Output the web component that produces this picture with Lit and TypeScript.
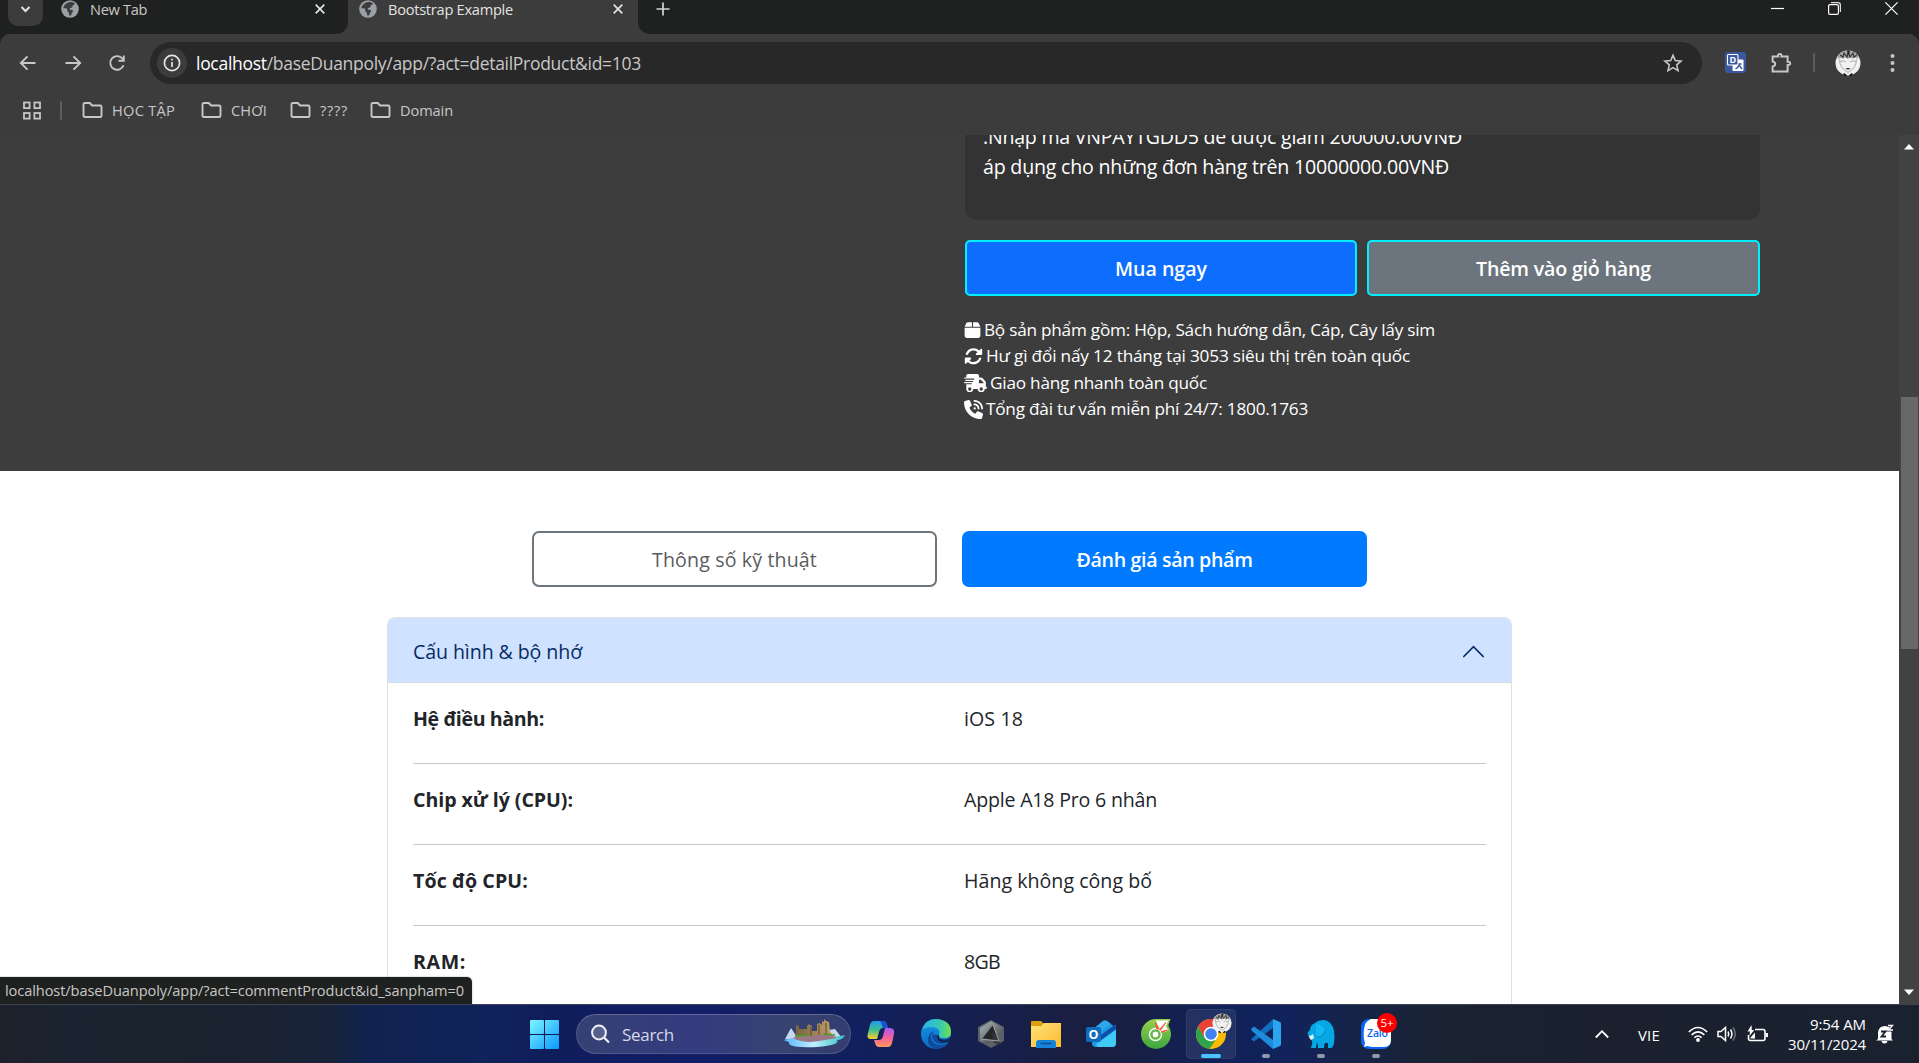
import { LitElement, html, css, svg } from "lit";
import { customElement, property } from "lit/decorators.js";

/** One line of text whose letter spacing is tuned so that it spans `w` pixels. */
@customElement("fit-text")
class FitText extends LitElement {
  @property({ type: Number }) w = 0;
  static styles = css`
    :host { display: inline-block; white-space: nowrap; flex: none; }
  `;
  firstUpdated() {
    const n = [...(this.textContent ?? "").trim()].length;
    const natural = this.getBoundingClientRect().width;
    if (this.w && n) this.style.letterSpacing = `${((this.w - natural) / n).toFixed(3)}px`;
  }
  render() {
    return html`<slot></slot>`;
  }
}

const t = (text: string, w: number) => html`<fit-text w=${w}>${text}</fit-text>`;

const globe = html`<svg class="i18" viewBox="0 0 18 18">
  <circle cx="9" cy="9" r="8.8" fill="#9aa0a6" />
  <path d="M8.2 2.200c2.400-.5 4.600.2 5.800 1.600-.6 1-1.700.9-2.300 1.700-.5.7.1 1.500-.7 2.100-.8.5-1.800.1-2.300.8-.4.7.3 1.300 1.200 1.300 1.500 0 2 .4 2.100 1.400.1 1.100-1.100 1.300-1.300 2.300-.2.9-.5 2-1.700 2.300-1.300-.3-.9-1.600-1-2.500-.2-1.200-1.500-1.200-1.700-2.400-.2-1 .2-1.600-.7-2.200-.9-.5-2-.1-3.200-.4.1-2.600 2.800-5.400 5.800-6z" fill="#3c3c3c"/>
</svg>`;
const tabClose = html`<svg class="i12" viewBox="0 0 12 12"><path d="M1.700 1.700l8.600 8.600M10.300 1.700l-8.600 8.600" stroke="#e3e3e3" stroke-width="1.700"/></svg>`;
const folder = html`<svg class="folder" viewBox="0 0 21 16"><path d="M2.800 1h5l2.200 2.500h8.200q1.300 0 1.300 1.300v8.900q0 1.300-1.300 1.300H2.800q-1.300 0-1.300-1.300V2.300Q1.500 1 2.800 1z" fill="none" stroke="#c7c7c7" stroke-width="1.900"/></svg>`;

const face = svg`
  <circle cx="13" cy="13" r="12.500" fill="#f1f1f1"/>
  <path d="M2.500 9Q3 4 8 1.600 13-.6 18 1.600 23 4 23.500 9 20 6.500 18 9 15 6 13 9 10 6 8 9 5 7 2.500 9z" fill="#a5a5a5"/>
  <path d="M5 5l3 2 1-4 3 4 1-5 2 5 3-4 1 4 3-2" fill="none" stroke="#333" stroke-width="1.200"/>
  <path d="M12 .6h3l-1 5z" fill="#222"/>
  <path d="M5 11.500q3-1.500 6 .3M15 11.800q3-1.800 6-.3M4.500 9q0 9 8.500 13.500Q21.500 18 21.500 9" fill="none" stroke="#a5a5a5" stroke-width=".9"/>
  <path d="M10.500 19q2.500-2 5 0-2.500.8-5 0z" fill="#222"/>
  <path d="M9 23.500l2.500 1.800-2.500-.3zM17 23.500l-2.500 1.800 2.500-.3z" fill="#111" stroke="#111"/>`;

const fa = {
  box: html`<svg class="fa" width="17" height="18" viewBox="0 0 448 512"><path d="M50.700 58.500L0 160H208V32H93.700C75.500 32 58.900 42.300 50.700 58.500zM240 160H448L397.300 58.500C389.100 42.300 372.500 32 354.300 32H240V160zm208 32H0V416c0 35.300 28.700 64 64 64H384c35.300 0 64-28.700 64-64V192z"/></svg>`,
  rotate: html`<svg class="fa" width="19" height="18.500" viewBox="0 0 512 512"><path d="M142.900 142.900c62.200-62.200 162.700-62.500 225.300-1L327 183c-6.900 6.900-8.900 17.200-5.200 26.200s12.500 14.800 22.200 14.800H463.500H472c13.300 0 24-10.700 24-24V72c0-9.700-5.800-18.500-14.800-22.200s-19.300-1.700-26.200 5.200L413.400 96.600c-87.600-86.500-228.700-86.200-315.800 1C73.200 122 55.600 150.700 44.800 181.400c-5.900 16.700 2.900 34.900 19.500 40.800s34.900-2.900 40.800-19.500c7.700-21.800 20.200-42.300 37.800-59.800zM16 312V440c0 9.700 5.800 18.500 14.800 22.200s19.300 1.700 26.200-5.200l41.600-41.600c87.600 86.500 228.700 86.200 315.800-1c24.400-24.400 42.100-53.100 52.900-83.700c5.900-16.700-2.900-34.900-19.500-40.800s-34.900 2.900-40.800 19.500c-7.700 21.800-20.200 42.300-37.800 59.800c-62.200 62.200-162.700 62.500-225.300 1L185 329c6.900-6.900 8.900-17.200 5.200-26.200s-12.500-14.800-22.200-14.800H40c-13.300 0-24 10.700-24 24z"/></svg>`,
  truck: html`<svg class="fa" width="23" height="18.400" viewBox="0 0 640 512"><path d="M112 0C85.500 0 64 21.500 64 48V96H16c-8.800 0-16 7.200-16 16s7.200 16 16 16H64 272c8.800 0 16 7.200 16 16s-7.200 16-16 16H64 48c-8.800 0-16 7.200-16 16s7.200 16 16 16H64 240c8.800 0 16 7.200 16 16s-7.200 16-16 16H64 16c-8.800 0-16 7.200-16 16s7.200 16 16 16H64 208c8.800 0 16 7.200 16 16s-7.200 16-16 16H64V416c0 53 43 96 96 96s96-43 96-96H384c0 53 43 96 96 96s96-43 96-96h32c17.700 0 32-14.300 32-32s-14.300-32-32-32V288 256 237.300c0-17-6.700-33.300-18.700-45.300L512 114.700c-12-12-28.300-18.700-45.300-18.700H416V48c0-26.500-21.500-48-48-48H112zM544 237.300V256H416V160h50.700L544 237.300zM160 368a48 48 0 1 1 0 96 48 48 0 1 1 0-96zm272 48a48 48 0 1 1 96 0 48 48 0 1 1 -96 0z"/></svg>`,
  phone: html`<svg class="fa" width="19" height="19" viewBox="0 0 512 512"><path d="M280 0C408.100 0 512 103.900 512 232c0 13.300-10.700 24-24 24s-24-10.700-24-24c0-101.600-82.400-184-184-184c-13.300 0-24-10.700-24-24s10.700-24 24-24zm8 192a32 32 0 1 1 0 64 32 32 0 1 1 0-64zm-32-72c0-13.300 10.700-24 24-24c75.100 0 136 60.900 136 136c0 13.300-10.700 24-24 24s-24-10.700-24-24c0-48.600-39.400-88-88-88c-13.300 0-24-10.700-24-24zM117.500 1.400c19.400-5.300 39.700 4.600 47.400 23.200l40 96c6.800 16.300 2.100 35.200-11.600 46.300L144 207.300c33.300 70.400 90.300 127.400 160.700 160.700L345 318.700c11.200-13.700 30-18.400 46.300-11.600l96 40c18.600 7.700 28.500 28 23.200 47.400l-24 88C481.800 499.900 466 512 448 512C200.600 512 0 311.400 0 64C0 46 12.100 30.200 29.500 25.400l88-24z"/></svg>`,
};

@customElement("browser-chrome")
class BrowserChrome extends LitElement {
  static styles = css`
    :host { display: block; background: #1f2120; color: #c7c7c7; font-family: "Open Sans", "Noto Sans", sans-serif; }
    svg { display: block; flex: none; }
    .i18 { width: 18px; height: 18px; }
    .i12 { width: 12px; height: 12px; }
    .strip { height: 34px; display: flex; }
    .drop { width: 35px; height: 26px; margin-left: 8px; background: #3c3c3c; border-radius: 0 0 10px 10px; display: flex; justify-content: center; }
    .drop svg { margin-top: 5px; }
    .tab { height: 34px; display: flex; box-sizing: border-box; font-size: 14.600px; line-height: 20px; }
    .tab .i12 { margin-top: 3px; }
    .label { margin-top: -1px; margin-left: 11px; flex: 1; }
    .first { width: 305px; padding-left: 18px; padding-right: 22px; background: #1f2120; border-bottom-right-radius: 12px; }
    .under { background: #3c3c3c; }
    .second { width: 290px; background: #3c3c3c; padding: 0 14px 0 11px; color: #e3e3e3; }
    .rest { flex: 1; background: #3c3c3c; }
    .rest-in { height: 34px; background: #1f2120; border-bottom-left-radius: 12px; display: flex; padding-left: 18px; }
    .rest-in .plus { margin-top: 2px; }
    .wins { margin-left: auto; margin-right: 21px; margin-top: 2px; display: flex; gap: 44px; }
    .bar { height: 57px; background: #3c3c3c; border-radius: 10px 10px 0 0; display: flex; align-items: center; padding-left: 16px; }
    .nav { display: flex; gap: 20.500px; }
    .omni { width: 1552px; height: 42px; border-radius: 21px; background: #282828; margin-left: 21px; display: flex; align-items: center; box-sizing: border-box; padding: 0 19px 0 7px; }
    .info { width: 30px; height: 30px; border-radius: 50%; background: #3c3c3c; display: flex; align-items: center; justify-content: center; }
    .url { margin-left: 9px; font-size: 17.500px; line-height: 24px; flex: 1; padding-top: 1px; }
    .url b { font-weight: 400; color: #fff; }
    .ext { display: flex; align-items: center; margin-left: 23px; }
    .ext .puz { margin-left: 23px; }
    .sep { width: 2px; height: 19px; background: #5e5e5e; border-radius: 1px; }
    .ext .sep { margin-left: 20px; }
    .ext .av { margin-left: 20px; }
    .ext .dots { margin-left: 29px; }
    .marks { height: 44px; background: #3c3c3c; display: flex; align-items: center; padding-left: 23px; box-sizing: border-box; padding-bottom: 6px; }
    .marks .sep { margin: 0 20px 0 19px; }
    .mark { display: flex; align-items: center; gap: 9px; font-size: 14.600px; line-height: 20px; }
    .folder { width: 21px; height: 16px; }
    .m1 { margin-right: 26px; } .m2 { margin-right: 23px; } .m3 { margin-right: 22px; }
  `;
  render() {
    return html`
      <div class="strip">
        <div class="drop"><svg width="11" height="9" viewBox="0 0 11 9"><path d="M1.500 2l4 4 4-4" fill="none" stroke="#e3e3e3" stroke-width="2"/></svg></div>
        <div class="under"><div class="tab first">${globe}<div class="label">${t("New Tab", 57)}</div>${tabClose}</div></div>
        <div class="tab second">${globe}<div class="label">${t("Bootstrap Example", 125)}</div>${tabClose}</div>
        <div class="rest"><div class="rest-in">
          <svg class="plus" width="14" height="14" viewBox="0 0 14 14"><path d="M7 .5v13M.5 7h13" stroke="#d5d5d5" stroke-width="1.700"/></svg>
          <div class="wins">
            <svg width="13" height="13" viewBox="0 0 13 13"><path d="M0 6.500h13" stroke="#fff" stroke-width="1.200"/></svg>
            <svg width="13" height="13" viewBox="0 0 13 13"><rect x=".6" y="2.600" width="9.800" height="9.800" rx="1.500" fill="none" stroke="#fff" stroke-width="1.200"/><path d="M3 .6h7q2.400 0 2.400 2.400v7" fill="none" stroke="#ddd" stroke-width="1.200"/></svg>
            <svg width="13" height="13" viewBox="0 0 13 13"><path d="M.4.4l12.200 12.200M12.600.4L.4 12.600" stroke="#fff" stroke-width="1.200"/></svg>
          </div>
        </div></div>
      </div>
      <div class="bar">
        <div class="nav">
          <svg width="24" height="24" viewBox="0 0 24 24"><path d="M19.500 12H5.500M11.500 5.300L4.800 12l6.700 6.700" fill="none" stroke="#c7c7c7" stroke-width="1.900"/></svg>
          <svg width="24" height="24" viewBox="0 0 24 24"><path d="M4.500 12h14M12.500 5.300l6.700 6.700-6.700 6.700" fill="none" stroke="#c7c7c7" stroke-width="1.900"/></svg>
          <svg width="24" height="24" viewBox="0 0 24 24"><path d="M18.500 14.200a6.800 6.800 0 1 1-1.500-7l2 2M18.800 4.500v5.300h-5.300" fill="none" stroke="#c7c7c7" stroke-width="1.900"/></svg>
        </div>
        <div class="omni">
          <div class="info"><svg width="18" height="18" viewBox="0 0 18 18"><circle cx="9" cy="9" r="7.600" fill="none" stroke="#e3e3e3" stroke-width="1.700"/><path d="M9 8v5M9 4.800v1.800" stroke="#e3e3e3" stroke-width="1.700"/></svg></div>
          <div class="url"><fit-text w="445"><b>localhost</b>/baseDuanpoly/app/?act=detailProduct&amp;id=103</fit-text></div>
          <svg width="20" height="20" viewBox="0 0 20 20"><path d="M10 2.200l2.300 5.400 5.800.5-4.400 3.800 1.300 5.700-5-3-5 3 1.300-5.700L1.900 8.100l5.800-.5z" fill="none" stroke="#c7c7c7" stroke-width="1.600"/></svg>
        </div>
        <div class="ext">
          <svg width="21" height="21" viewBox="0 0 21 21"><rect width="21" height="21" rx="3" fill="#3b57a0"/><rect x="7.500" y="7.500" width="11" height="11.500" rx="1" fill="#fff"/><rect x="2.500" y="2.500" width="10.500" height="10.500" rx="1" fill="#3b57a0" stroke="#fff" stroke-width="1.100"/><text x="4.600" y="11" font-size="9" font-weight="700" fill="#fff" font-family="Open Sans">D</text><path d="M10.500 17q3-1.500 3.500-4l3 4M13.500 12h3" stroke="#3b57a0" stroke-width="1.300" fill="none"/></svg>
          <svg class="puz" width="24" height="24" viewBox="0 0 24 24"><path d="M3.600 5.500h5.600q-.4-2.600 1.600-2.600t1.600 2.600h6.200v5.300q2.600-.3 2.600 1.600t-2.600 1.600v6.500H3.600v-5q2.600-.4 2.600-2.500T3.600 10.500z" fill="none" stroke="#c7c7c7" stroke-width="2"/></svg>
          <div class="sep"></div>
          <svg class="av" width="26" height="26" viewBox="0 0 26 26">${face}</svg>
          <svg class="dots" width="5" height="20" viewBox="0 0 5 20"><g fill="#c7c7c7"><circle cx="2.500" cy="3" r="2"/><circle cx="2.500" cy="10" r="2"/><circle cx="2.500" cy="17" r="2"/></g></svg>
        </div>
      </div>
      <div class="marks">
        <svg width="18" height="19" viewBox="0 0 18 19"><g fill="none" stroke="#c7c7c7" stroke-width="1.800"><rect x="1" y="1.500" width="5.600" height="5.600"/><rect x="11.400" y="1.500" width="5.600" height="5.600"/><rect x="1" y="12" width="5.600" height="5.600"/><rect x="11.400" y="12" width="5.600" height="5.600"/></g></svg>
        <div class="sep"></div>
        <div class="mark m1">${folder}${t("HỌC TẬP", 63)}</div>
        <div class="mark m2">${folder}${t("CHƠI", 36)}</div>
        <div class="mark m3">${folder}${t("????", 28)}</div>
        <div class="mark">${folder}${t("Domain", 53)}</div>
      </div>`;
  }
}

@customElement("product-page")
class ProductPage extends LitElement {
  static styles = css`
    :host { display: flex; height: 869px; overflow: hidden; background: #fff; font-family: "Open Sans", "Noto Sans", sans-serif; font-size: 19.600px; line-height: 30px; color: #212529; position: relative; }
    svg { display: block; flex: none; }
    .page { width: 1899px; height: 869px; overflow: hidden; }
    .dark { height: 336px; background: #3d3d3d; color: #fff; box-sizing: border-box; padding-left: 965px; overflow: hidden; }
    .promo { width: 795px; height: 85px; background: #333; border-radius: 0 0 12px 12px; box-sizing: border-box; padding-left: 18px; display: flex; flex-direction: column; overflow: hidden; }
    .promo div { height: 30px; flex: none; }
    .promo div:first-child { margin-top: -13px; }
    .buy { display: flex; gap: 10px; width: 795px; margin-top: 20px; }
    .buy div { width: 392px; height: 56px; box-sizing: border-box; border: 2px solid #00f0ff; border-radius: 5px; text-align: center; line-height: 54px; font-weight: 600; background: #0d6efd; }
    .buy div.grey { width: 393px; background: #6c757d; }
    .perks { margin: 21px 0 0 -1px; font-size: 17.200px; line-height: 26.400px; }
    .perk { height: 26.400px; display: flex; align-items: center; gap: 3px; }
    .fa { fill: #fff; }
    .toggles { display: flex; gap: 25px; margin: 60px 0 0 532px; }
    .toggles div { width: 405px; height: 56px; box-sizing: border-box; border: 2px solid #6c757d; border-radius: 7px; text-align: center; line-height: 54px; font-weight: 500; color: #5a5c5e; }
    .toggles div.on { background: #007bff; border-color: #007bff; color: #fff; font-weight: 600; }
    .acc { width: 1125px; height: 420px; margin: 30px 0 0 387px; box-sizing: border-box; border: 1px solid #dee2e6; border-bottom: 0; border-radius: 8px 8px 0 0; overflow: hidden; }
    .head { height: 65px; box-sizing: border-box; border-bottom: 1px solid #d5dbe3; background: #cfe2ff; color: #052c65; display: flex; align-items: center; justify-content: space-between; padding: 4px 27px 0 25px; }
    .head svg { margin-top: -2px; }
    .rows { padding: 20px 25px 0; }
    .row { display: flex; height: 61px; box-sizing: border-box; border-bottom: 1px solid #c6c8ca; margin-bottom: 20px; padding-top: 1px; }
    .row b { width: 551px; font-weight: 700; }
    .sb { width: 20px; background: #424242; display: flex; flex-direction: column; align-items: center; }
    .sb .up { margin-top: 9px; }
    .thumb { width: 17px; height: 252px; background: #686868; margin-top: 247px; }
    .sb .down { margin-top: auto; margin-bottom: 9px; }
    .status { position: absolute; left: 0; bottom: 0; width: 472px; height: 27px; background: #1f2120; color: #c7c7c7; border-top-right-radius: 5px; box-sizing: border-box; padding-left: 5px; font-size: 14.600px; line-height: 27px; box-shadow: 0 0 1px 1px #8883; }
  `;
  private specs: [string, number, string, number][] = [
    ["Hệ điều hành:", 131, "iOS 18", 59],
    ["Chip xử lý (CPU):", 160, "Apple A18 Pro 6 nhân", 193],
    ["Tốc độ CPU:", 115, "Hãng không công bố", 188],
    ["RAM:", 53, "8GB", 36],
  ];
  render() {
    return html`
      <div class="page">
        <div class="dark">
          <div class="promo">
            <div>${t(".Nhập mã VNPAYTGDD5 để được giảm 200000.00VNĐ", 479)}</div>
            <div>${t("áp dụng cho những đơn hàng trên 10000000.00VNĐ", 466)}</div>
          </div>
          <div class="buy">
            <div>${t("Mua ngay", 92)}</div>
            <div class="grey">${t("Thêm vào giỏ hàng", 175)}</div>
          </div>
          <div class="perks">
            <div class="perk">${fa.box}${t("Bộ sản phẩm gồm: Hộp, Sách hướng dẫn, Cáp, Cây lấy sim", 451)}</div>
            <div class="perk">${fa.rotate}${t("Hư gì đổi nấy 12 tháng tại 3053 siêu thị trên toàn quốc", 424)}</div>
            <div class="perk">${fa.truck}${t("Giao hàng nhanh toàn quốc", 217)}</div>
            <div class="perk">${fa.phone}${t("Tổng đài tư vấn miễn phí 24/7: 1800.1763", 322)}</div>
          </div>
        </div>
        <div class="toggles">
          <div>${t("Thông số kỹ thuật", 165)}</div>
          <div class="on">${t("Đánh giá sản phẩm", 176)}</div>
        </div>
        <div class="acc">
          <div class="head">
            ${t("Cấu hình & bộ nhớ", 169)}
            <svg width="21" height="13" viewBox="0 0 21 13"><path d="M.8 11.500L10.500 1.600l9.700 9.900" fill="none" stroke="#052c65" stroke-width="1.700" stroke-linecap="round"/></svg>
          </div>
          <div class="rows">
            ${this.specs.map(([k, kw, v, vw]) => html`<div class="row"><b>${t(k, kw)}</b>${t(v, vw)}</div>`)}
          </div>
        </div>
      </div>
      <div class="sb">
        <svg class="up" width="10" height="6" viewBox="0 0 10 6"><path d="M0 5.500L5 0l5 5.500z" fill="#fff"/></svg>
        <div class="thumb"></div>
        <svg class="down" width="10" height="6" viewBox="0 0 10 6"><path d="M0 .5L5 6l5-5.500z" fill="#fff"/></svg>
      </div>
      <div class="status">${t("localhost/baseDuanpoly/app/?act=commentProduct&id_sanpham=0", 459)}</div>`;
  }
}

@customElement("task-bar")
class TaskBar extends LitElement {
  static styles = css`
    :host { display: flex; height: 59px; box-sizing: border-box; border-top: 1px solid #3c4257; color: #fff; font-family: "Open Sans", "Noto Sans", sans-serif;
      background: linear-gradient(90deg, #1e212b 0, #1a232f 60px, #1b222f 240px, #18233a 330px, #10234f 365px, #10235a 480px, #101d5c 560px, #121e66 690px, #11205e 860px, #151f50 960px, #1a1f40 1080px, #171f45 1140px, #10215a 1210px, #11235a 1290px, #152449 1350px, #1a2333 1430px, #1a202d 1600px, #1a2230 1919px); }
    svg { display: block; flex: none; overflow: visible; }
    .start { margin: 15px 0 0 530px; }
    .search { width: 275px; height: 40px; box-sizing: border-box; margin: 9px 0 0 17px; border-radius: 20px; border: 1px solid #ffffff22; border-top-color: #ffffff38; background: linear-gradient(90deg, #354173, #343b80 45%, #364370 75%, #333d70); display: flex; align-items: center; padding: 0 5px 0 14px; font-size: 17px; color: #d5d9e8; }
    .search fit-text { margin-left: 12px; margin-right: auto; line-height: 22px; padding-top: 1px; }
    .apps { display: flex; margin-left: 2px; }
    .app { width: 55px; height: 58px; display: flex; flex-direction: column; align-items: center; padding-top: 14px; box-sizing: border-box; }
    .dot { width: 8px; height: 4px; border-radius: 2px; background: #9498ac; margin-top: 5px; flex: none; }
    .dot.on { width: 20px; background: #4cc2ff; }
    .tile { width: 50px; height: 50px; margin: 4px 2.500px 0; padding-top: 9px; border-radius: 5px; background: #ffffff14; border: 1px solid #ffffff10; box-sizing: border-box; }
    .tray { margin-left: auto; margin-right: 25px; display: flex; align-items: center; height: 57px; font-size: 15px; line-height: 20px; }
    .vie { margin: 2px 0 0 29px; }
    .wifi { margin-left: 28px; } .vol { margin-left: 9px; } .bat { margin-left: 10px; }
    .clock { display: flex; flex-direction: column; align-items: flex-end; width: 78px; margin-left: 20px; }
    .bell { margin-left: 10px; }
  `;
  render() {
    return html`
      <svg class="start" width="29" height="29" viewBox="0 0 29 29"><defs><linearGradient id="w" gradientUnits="userSpaceOnUse" x1="0" y1="0" x2="29" y2="29"><stop offset="0" stop-color="#7df6ff"/><stop offset="1" stop-color="#0a97ff"/></linearGradient></defs><g fill="url(#w)"><rect width="14" height="14" rx="1"/><rect x="15" width="14" height="14" rx="1"/><rect y="15" width="14" height="14" rx="1"/><rect x="15" y="15" width="14" height="14" rx="1"/></g></svg>
      <div class="search">
        <svg width="19" height="20" viewBox="0 0 19 20"><circle cx="8" cy="8.500" r="6.900" fill="#56608b" stroke="#eef0f6" stroke-width="2"/><path d="M13 13.500l5 5" stroke="#eef0f6" stroke-width="2.200"/></svg>
        ${t("Search", 52)}
        <svg width="62" height="30" viewBox="0 0 62 30"><defs><linearGradient id="sea"><stop offset="0" stop-color="#59b5ff"/><stop offset=".5" stop-color="#bdf0ff"/><stop offset="1" stop-color="#38bfc4"/></linearGradient><linearGradient id="cas"><stop offset="0" stop-color="#7a6342"/><stop offset="1" stop-color="#c2a06a"/></linearGradient></defs>
          <path d="M2 20L8 9l6 9 26-6 12-2 7 9z" fill="#c9d6f2"/>
          <path d="M0 21q20-4 30-2t32-3q-2 5-8 5 4 5-20 7-24 1-28-3 2-2-6-4z" fill="url(#sea)"/>
          <path d="M13 17V6l3 1v3h8V7l2-2 3 2v5h5V5l3-1 2 2V2l2 1V0l2 2 3 1 1 9 3 5z" fill="url(#cas)"/><path d="M28 8v9M36 6v10M43 4v12" stroke="#5b4628"/>
          <path d="M10 19q8-5 18-2 14-3 26 1-2 2-6 2-16 3-22 3-12-1-16-4z" fill="#9a7784"/><path d="M12 17l14-1M40 15l12 1" stroke="#4d9a22" stroke-width="1.600"/></svg>
      </div>
      <div class="apps">
        <div class="app"><svg width="30" height="30" viewBox="0 0 30 30"><defs><linearGradient id="c1" x2="0" y2="1"><stop offset="0" stop-color="#1e9bf0"/><stop offset=".5" stop-color="#3fbf8c"/><stop offset="1" stop-color="#ffd02e"/></linearGradient><linearGradient id="c2" x2="0" y2="1"><stop offset="0" stop-color="#a35cf5"/><stop offset=".5" stop-color="#f4609b"/><stop offset="1" stop-color="#ff9a5a"/></linearGradient></defs>
          <path d="M8 2h9q3 0 4 4l1 3h-5q-3 0-4 4l-2 7H5q-5 0-3-6L4 6q1-4 4-4z" fill="url(#c1)"/><path d="M14 2h4q2 0 3 4l1 3h-5q-2-6-3-7z" fill="#1b4fd1"/><path d="M22 28h-9q-3 0-4-4l-1-3h5q3 0 4-4l2-8h5q5 0 4 6l-2 9q-1 4-4 4z" fill="url(#c2)"/></svg></div>
        <div class="app"><svg width="30" height="30" viewBox="0 0 30 30"><defs><linearGradient id="e1"><stop offset="0" stop-color="#2bb5e6"/><stop offset=".6" stop-color="#35c8b4"/><stop offset="1" stop-color="#6fe04a"/></linearGradient><linearGradient id="e2" x2="0" y2="1"><stop offset="0" stop-color="#1598e0"/><stop offset="1" stop-color="#0c6ac8"/></linearGradient></defs>
          <circle cx="15" cy="15" r="15" fill="url(#e2)"/><path d="M1 11Q4 0 15 0q15 1 15 13 0 6-7 6-6 0-5-3 2-7-6-8Q4 8 1 11z" fill="url(#e1)"/><path d="M10 15q-1 12 12 11 4-1 5-3-5 7-13 7Q6 27 7 19q1-5 6-7-4 4 0 10 5 5 13 1l2-1q-6 0-9-2-2-2-1-4" fill="#0f4a9c"/><path d="M18 16q-1 5 6 4.500 3 0 6-3v5q-3 1-6 1-8 0-8-6z" fill="#11204e" opacity=".9"/></svg></div>
        <div class="app"><svg width="30" height="30" viewBox="0 0 30 30"><defs><linearGradient id="a1" x2="1" y2="1"><stop offset="0" stop-color="#aeb6bb"/><stop offset="1" stop-color="#3c4145"/></linearGradient></defs><path d="M15 1l13 7v14l-13 7-13-7V8z" fill="#5a6065"/><path d="M15 2l12 7-7 12L4 23V9z" fill="url(#a1)"/><path d="M17 6l6 16-17-2z" fill="#24272a"/><path d="M16 12l2 12 7 2-2-4z" fill="#34383b"/><path d="M6 20l17 2M17 6l6 16" stroke="#c5cbd0" stroke-width=".7"/></svg></div>
        <div class="app"><svg width="30" height="30" viewBox="0 0 30 30"><defs><linearGradient id="f1" x2="1" y2="1"><stop offset="0" stop-color="#ffe37a"/><stop offset="1" stop-color="#fdb92e"/></linearGradient></defs><path d="M0 3q0-1 1-1h9l3 3-3 3H0z" fill="#e09e0b"/><path d="M0 7h10l3-3h17v24H0z" fill="url(#f1)"/><path d="M5 29v-5q0-3 3-3h14q3 0 3 3v5z" fill="#1683d8"/><path d="M9.500 24.500h11" stroke="#0b4f93" stroke-width="1.500"/></svg></div>
        <div class="app"><svg width="30" height="30" viewBox="0 0 30 30"><path d="M6 11L17 2q2-1 4 0l9 7v15q0 4-4 4H10q-4 0-4-4z" fill="#1f9be6"/><path d="M6 11L17 2q2-1 4 0l4 3L8 17z" fill="#2ca7ea"/><path d="M12 18L30 5v5L14 22z" fill="#0d4fa8"/><path d="M30 11v13q0 4-4 4H12l-2-3z" fill="#3fcaf5"/><rect y="8" width="15" height="15" rx="2" fill="#0f6cbd"/><text x="7.500" y="20" font-size="12.500" font-weight="700" text-anchor="middle" fill="#fff" font-family="Open Sans">O</text></svg></div>
        <div class="app"><svg width="30" height="30" viewBox="0 0 30 30"><defs><linearGradient id="k1" x2="0" y2="1"><stop offset="0" stop-color="#96d24c"/><stop offset="1" stop-color="#3da53f"/></linearGradient></defs>
          <path d="M15 0h14.500l-2.200 6.500Q30 10 30 15a15 15 0 1 1-15-15z" fill="url(#k1)"/>
          <path d="M15 1.500h12.500L25 7l2.500 4.500-9 3z" fill="#fff"/>
          <circle cx="14.500" cy="15.500" r="5" fill="#fff" stroke="#fff" stroke-width="3.500"/><circle cx="14.500" cy="15.500" r="4" fill="none" stroke="#65b84a" stroke-width="2.600"/><circle cx="14.500" cy="15.500" r="2.700" fill="#fff"/>
          <path d="M14.500 3.500l3.500 6-2 .8zM25 3.500l-6.500 7 1 .7zM26.500 11l-6 2.500v-1z" fill="#ef5b34" stroke="#ef5b34"/></svg></div>
        <div class="app tile"><svg width="30" height="30" viewBox="0 0 30 30"><circle cx="15" cy="15" r="15" fill="#fbbc05"/><path d="M2 7.500A15 15 0 0 1 28 7.500L15 8z" fill="#ea4335"/><path d="M2 7.500A15 15 0 0 1 28 7.500H15L8.500 19z" fill="#ea4335"/><path d="M2 7.500l6.500 11.200L15 22.500l-1.500 7.400A15 15 0 0 1 2 7.500z" fill="#2fa24c"/><path d="M13.500 30L21.500 18l-6.500 4z" fill="#2fa24c"/><circle cx="15" cy="15" r="7.300" fill="#fff"/><circle cx="15" cy="15" r="5.800" fill="#3f83f2"/><svg x="16" y="-6" width="20" height="20" viewBox="0 0 26 26">${face}</svg></svg><div class="dot on"></div></div>
        <div class="app"><svg width="30" height="30" viewBox="0 0 30 30"><path d="M22 0l7 3q1 .5 1 2v20q0 1.500-1 2l-7 3z" fill="#2aa5f0"/><path d="M22 0L3 17.500 0 20l3 2.500L22 9z" fill="#0f6fbe"/><path d="M0 10l3-2.500L22 21v9L1 12z" fill="#1c8cdb"/></svg><div class="dot"></div></div>
        <div class="app"><svg width="30" height="30" viewBox="0 0 30 30"><path d="M4 11q0-5 5-7Q12 1 18 1q8 1 10 11 1 6 0 12-1 5-3 5h-3v-5h-3q-1 1-1 5h-6q0-4-1-6l-1 6H5q0-2 1-3 1-3-1-6-4-3-3-7z" fill="#06a8e4"/><path d="M10 5q6 0 9 6-1 6-6 7-4-3-3-6" fill="#13b9f2"/><path d="M3 17q2 0 4-2l1 4q-3 3-4 1z" fill="#e6f6fb"/><path d="M12 18q5 0 7-6" fill="none" stroke="#0a7fb3"/></svg><div class="dot"></div></div>
        <div class="app"><svg width="30" height="30" viewBox="0 0 30 30"><rect width="30" height="30" rx="8" fill="#0b66f5"/><path d="M10 0h13q7 0 7 7v14q0 7-7 7H11l-5-1-3 1 1-4Q2 18 3 10q1-8 7-10z" fill="#fff"/><text x="6" y="18" font-size="10.500" font-weight="600" fill="#0b66f5" font-family="Open Sans" textLength="21">Zalo</text><circle cx="26" cy="4" r="10" fill="#f00"/><text x="26" y="8.300" font-size="11.500" text-anchor="middle" fill="#fff" font-family="Open Sans">5+</text></svg><div class="dot"></div></div>
      </div>
      <div class="tray">
        <svg width="14" height="10" viewBox="0 0 14 10"><path d="M.8 8.500L7 2.200l6.200 6.300" fill="none" stroke="#fff" stroke-width="1.800"/></svg>
        <div class="vie">${t("VIE", 22)}</div>
        <svg class="wifi" width="20" height="16" viewBox="0 0 20 16"><g fill="none" stroke="#fff" stroke-width="1.600"><path d="M.8 6q9.200-9 18.400 0M3.600 8.900q6.400-6.200 12.800 0M6.400 11.700q3.600-3.400 7.200 0"/></g><circle cx="10" cy="14" r="1.900" fill="#fff"/></svg>
        <svg class="vol" width="20" height="16" viewBox="0 0 20 16"><path d="M1 5.500h3L8.500 1.500v13L4 10.500H1z" fill="none" stroke="#fff" stroke-width="1.500"/><path d="M11 5.500q1.600 2.500 0 5M13.500 3.500q3 4.500 0 9" fill="none" stroke="#fff" stroke-width="1.500"/><path d="M16 1.500q4.500 6.500 0 13" fill="none" stroke="#6b7280" stroke-width="1.500"/></svg>
        <svg class="bat" width="21" height="18" viewBox="0 0 21 18"><path d="M8 4.500h8q2 0 2 2v7q0 2-2 2H3.500q-2 0-2-2V10" fill="none" stroke="#fff" stroke-width="1.600"/><path d="M18.500 8h2.500v4h-2.500z" fill="#fff"/><path d="M3.500 12.500L8 7.500v6H3.500z" fill="#fff"/><path d="M4.500 0L.5 6.500H3L2.500 11l4.700-6H4.800z" fill="#fff"/></svg>
        <div class="clock">${t("9:54 AM", 56)}${t("30/11/2024", 78)}</div>
        <svg class="bell" width="18" height="20" viewBox="0 0 18 20"><path d="M2 15V8q1-6 7-6 6 0 6.500 6v7l1.500 1.500H0z" fill="#fff"/><path d="M5.500 17h6q-.5 2.500-3 2.500t-3-2.500z" fill="#fff"/><path d="M5 7.500h4.500L5.500 12.500H10M11.500 1.500h5l-4 5h4.500" fill="none" stroke="#1a2230" stroke-width="1.800"/><path d="M12 1.500h4.500l-4 4.500h4.500" fill="none" stroke="#fff" stroke-width="1.300"/></svg>
      </div>`;
  }
}

@customElement("app-root")
class AppRoot extends LitElement {
  static styles = css`
    :host { display: block; width: 1919px; height: 1063px; overflow: hidden; }
  `;
  render() {
    return html`<browser-chrome></browser-chrome><product-page></product-page><task-bar></task-bar>`;
  }
}
